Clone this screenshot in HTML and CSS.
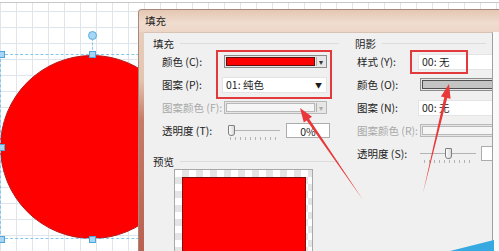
FILE: index.html
```html
<!DOCTYPE html>
<html lang="zh-CN">
<head>
    <meta charset="UTF-8">
    <meta name="viewport" content="width=device-width, initial-scale=1.0">
    <title>填充</title>
    <link rel="stylesheet" href="styles.css">
</head>
<body>
    <div class="canvas">
        <!-- 选中的圆形 -->
        <div class="circle"></div>
        <div class="selection"></div>
        <div class="rotate-line"></div>
        <div class="rotate-handle"></div>
        <div class="handle h-tl"></div>
        <div class="handle h-tm"></div>
        <div class="handle h-ml"></div>
        <div class="handle h-bl"></div>
        <div class="handle h-bm"></div>

        <!-- 填充对话框 -->
        <div class="dialog">
            <div class="titlebar">填充</div>
            <div class="frame">
                <div class="dialog-body">
                    <div class="col col-fill">
                        <div class="group-title">填充</div>
                        <div class="row">
                            <span class="label">颜色 (C):</span>
                            <div class="combo swatch-combo">
                                <div class="swatch red"></div>
                                <div class="drop">▾</div>
                            </div>
                        </div>
                        <div class="row">
                            <span class="label">图案 (P):</span>
                            <div class="combo text-combo">
                                <span>01:&nbsp;纯色</span>
                                <span class="arrow">▼</span>
                            </div>
                        </div>
                        <div class="row">
                            <span class="label off">图案颜色 (F):</span>
                            <div class="combo swatch-combo disabled">
                                <div class="swatch blank"></div>
                                <div class="drop">▾</div>
                            </div>
                        </div>
                        <div class="row">
                            <span class="label">透明度 (T):</span>
                            <div class="slider">
                                <div class="track"></div>
                                <div class="thumb"></div>
                                <div class="ticks"></div>
                            </div>
                            <div class="valuebox">0%</div>
                        </div>
                        <div class="group-title preview-title">预览</div>
                        <div class="preview">
                            <div class="preview-fill"></div>
                        </div>
                    </div>

                    <div class="col col-shadow">
                        <div class="group-title">阴影</div>
                        <div class="row">
                            <span class="label">样式 (Y):</span>
                            <div class="combo text-combo wide">
                                <span>00:&nbsp;无</span>
                            </div>
                        </div>
                        <div class="row">
                            <span class="label">颜色 (O):</span>
                            <div class="combo swatch-combo wide">
                                <div class="swatch grey"></div>
                            </div>
                        </div>
                        <div class="row">
                            <span class="label">图案 (N):</span>
                            <div class="combo text-combo wide">
                                <span>00:&nbsp;无</span>
                            </div>
                        </div>
                        <div class="row">
                            <span class="label off">图案颜色 (R):</span>
                            <div class="combo swatch-combo wide disabled">
                                <div class="swatch blank"></div>
                            </div>
                        </div>
                        <div class="row">
                            <span class="label">透明度 (S):</span>
                            <div class="slider slider-shadow">
                                <div class="track"></div>
                                <div class="thumb"></div>
                                <div class="ticks"></div>
                            </div>
                            <div class="valuebox"></div>
                        </div>
                    </div>
                </div>
                <div class="frame-edge"></div>
            </div>
        </div>

        <!-- 标注 -->
        <svg class="marks" width="499" height="251" viewBox="0 0 499 251">
            <rect x="217" y="51" width="114" height="47" fill="none" stroke="#e2393d" stroke-width="2"/>
            <rect x="411" y="51" width="56" height="22" fill="none" stroke="#e2393d" stroke-width="2"/>
            <polygon points="363,200 309.1,118.8 312,116.8 300,108 303.8,122.4 306.7,120.4" fill="#e8383a"/>
            <polygon points="423,193 444.3,97.3 440.9,96.4 449,84 450.6,98.8 447.2,97.9" fill="#e8383a"/>
            <polygon points="450,251 494,240 494,251" fill="#38a8e0"/>
        </svg>
    </div>
</body>
</html>
```

FILE: styles.css
```css
body {
    margin: 0;
    width: 499px;
    height: 251px;
    overflow: hidden;
    font-family: "Noto Sans CJK SC", "Noto Sans", sans-serif;
    font-size: 10.5px;
    color: #1c1c1c;
}
.canvas {
    position: relative;
    width: 499px;
    height: 251px;
    background-color: #fff;
    background-image:
        linear-gradient(to right, #dfe5ec 1px, transparent 1px),
        linear-gradient(to bottom, #dfe5ec 1px, transparent 1px);
    background-size: 16px 16px;
    background-position: 0 8px;
    border-top: 1px solid #c8c8c8;
    margin-top: 2px;
    box-sizing: border-box;
    overflow: hidden;
}

/* forma */
.circle {
    position: absolute;
    left: 0;
    top: 52px;
    width: 184px;
    height: 184px;
    border-radius: 50%;
    background: #ff0000;
    border: 1px solid #b81818;
    box-sizing: border-box;
}
.selection {
    position: absolute;
    left: 0;
    top: 51px;
    width: 200px;
    height: 185px;
    border: 1px dashed #86c6ec;
    box-sizing: border-box;
}
.rotate-line {
    position: absolute;
    left: 92px;
    top: 35px;
    height: 16px;
    border-left: 1px dashed #86c6ec;
}
.rotate-handle {
    position: absolute;
    left: 88px;
    top: 28px;
    width: 7px;
    height: 7px;
    border-radius: 50%;
    background: #a6d6f4;
    border: 1px solid #5aaee0;
}
.handle {
    position: absolute;
    width: 5px;
    height: 5px;
    background: #a6d6f4;
    border: 1px solid #4ea6dc;
}
.h-tl { left: -2px; top: 48px; }
.h-tm { left: 89px; top: 48px; }
.h-ml { left: -2px; top: 141px; }
.h-bl { left: -2px; top: 233px; }
.h-bm { left: 89px; top: 233px; }

/* dialogo */
.dialog {
    position: absolute;
    left: 138px;
    top: 6px;
    width: 361px;
    height: 250px;
    border-top: 1px solid #a8887a;
    border-left: 1px solid #a8887a;
    border-top-left-radius: 4px;
    box-sizing: border-box;
    background: linear-gradient(to bottom, #ead3c3 0, #e3c4b0 70px, #c87a68 110px, #b9604f 100%);
    display: flex;
    flex-direction: column;
}
.titlebar {
    height: 22px;
    line-height: 22px;
    padding-left: 6px;
    font-size: 10.5px;
    color: #1a1a1a;
    background: linear-gradient(to bottom, #e4c6b2, #f0ddd0 60%, #ecd6c6);
    border-top-left-radius: 4px;
}
.frame {
    flex: 1;
    display: flex;
    padding-left: 5px;
}
.dialog-body {
    width: 349px;
    background: #f0f0f0;
    border-right: 1px solid #a0a0a0;
    border-top: 1px solid #d8c2b4;
    display: flex;
    padding-top: 3px;
    box-sizing: border-box;
    overflow: hidden;
}
.frame-edge {
    flex: 1;
    background: #fafafa;
}
.col {
    display: flex;
    flex-direction: column;
}
.col-fill {
    width: 201px;
    flex: none;
}
.col-shadow {
    flex: 1;
    overflow: hidden;
}
.group-title {
    display: flex;
    align-items: center;
    gap: 6px;
    height: 14px;
    padding-left: 9px;
    white-space: nowrap;
}
.group-title::after {
    content: "";
    flex: 1;
    border-top: 1px solid #dcdcdc;
    margin-right: 6px;
}
.col-shadow .group-title {
    padding-left: 10px;
}
.row {
    display: flex;
    align-items: center;
    height: 23px;
    padding-left: 18px;
}
.col-shadow .row {
    padding-left: 12px;
}
.label {
    width: 60px;
    flex: none;
    white-space: nowrap;
}
.col-shadow .label {
    width: 61px;
}
.label.off {
    color: #a8a8a8;
}

/* controles */
.combo {
    display: flex;
    align-items: center;
    box-sizing: border-box;
    flex: none;
}
.swatch-combo {
    width: 103px;
    height: 13px;
    margin-left: 2px;
    border: 1px solid #8c8c8c;
    background: #e6e6e6;
    padding: 1px;
}
.swatch {
    flex: 1;
    height: 100%;
    box-sizing: border-box;
}
.swatch.red {
    background: #ff0000;
    border: 1px solid #5a1010;
}
.swatch.grey {
    background: #c4c4c4;
    border: 1px solid #505050;
}
.swatch.blank {
    background: #f6f6f6;
    border: 1px solid #b8b8b8;
}
.drop {
    width: 8px;
    font-size: 8px;
    line-height: 9px;
    text-align: center;
    color: #333;
    border-left: 1px solid #b0b0b0;
    margin-left: 1px;
}
.disabled {
    border-color: #b8b8b8;
}
.disabled .drop {
    color: #aaa;
}
.text-combo {
    width: 105px;
    height: 16px;
    background: #fff;
    border: 1px solid #e4e4e4;
    padding: 0 4px 0 3px;
    justify-content: space-between;
    white-space: nowrap;
}
.arrow {
    font-size: 7px;
}
.wide {
    width: 90px;
}
.col-shadow .swatch-combo {
    margin-left: 2px;
}
.slider {
    position: relative;
    width: 58px;
    height: 23px;
    flex: none;
}
.track {
    position: absolute;
    left: 8px;
    right: 0;
    top: 11px;
    border-top: 1px solid #b4b4b4;
}
.thumb {
    position: absolute;
    left: 6px;
    top: 6px;
    width: 5px;
    height: 9px;
    background: linear-gradient(to right, #fdfdfd, #dadada);
    border: 1px solid #7e7e7e;
    border-radius: 1px 1px 3px 3px;
}
.ticks {
    position: absolute;
    left: 8px;
    right: 4px;
    top: 18px;
    height: 3px;
    background-image: linear-gradient(to right, #b4b4b4 1px, transparent 1px);
    background-size: 5px 3px;
}
.slider-shadow {
    width: 58px;
    margin-left: 0;
}
.slider-shadow .track {
    left: 2px;
}
.slider-shadow .thumb {
    left: 27px;
}
.slider-shadow .ticks {
    left: 6px;
}
.valuebox {
    width: 44px;
    height: 15px;
    line-height: 15px;
    margin-left: 6px;
    background: #fff;
    border: 1px solid #acacac;
    box-sizing: border-box;
    text-align: center;
    flex: none;
}
.col-shadow .valuebox {
    margin-left: 5px;
}
.preview-title {
    margin-top: 12px;
}
.preview {
    margin: 1px 0 0 30px;
    width: 139px;
    height: 100px;
    border: 1px solid #a8a8a8;
    box-sizing: border-box;
    padding: 7px 6px 0 7px;
    background-color: #fff;
    background-image:
        linear-gradient(45deg, #e4e4e4 25%, transparent 25%, transparent 75%, #e4e4e4 75%),
        linear-gradient(45deg, #e4e4e4 25%, transparent 25%, transparent 75%, #e4e4e4 75%);
    background-size: 14px 14px;
    background-position: 0 0, 7px 7px;
}
.preview-fill {
    height: 100%;
    background: #ff0000;
    border: 1px solid #7a1010;
    box-sizing: border-box;
}

.marks {
    position: absolute;
    left: 0;
    top: -3px;
}
```
